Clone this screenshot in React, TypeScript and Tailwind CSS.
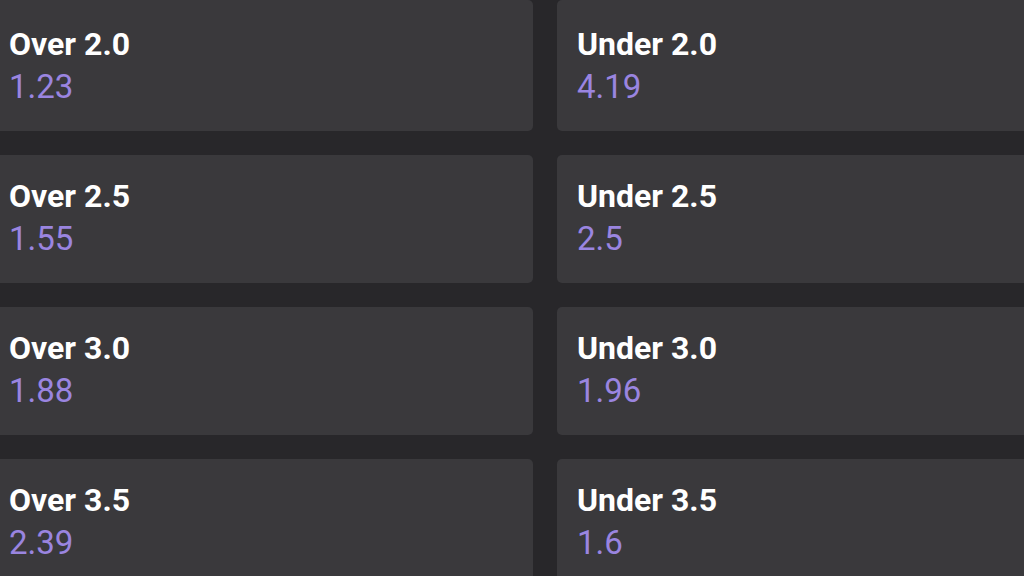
const rows: [string, string, string, string][] = [
    ['Over 2.0', '1.23', 'Under 2.0', '4.19'],
    ['Over 2.5', '1.55', 'Under 2.5', '2.5'],
    ['Over 3.0', '1.88', 'Under 3.0', '1.96'],
    ['Over 3.5', '2.39', 'Under 3.5', '1.6'],
];

function OddCard({ label, odd, first }: { label: string; odd: string; first: boolean }) {
    return (
        <div
            className={`rounded-[5px] bg-[#3a393c] px-[20px] ${first ? 'h-[131px] pt-[23px]' : 'h-[128px] pt-[20px]'}`}
        >
            <div className="text-[32px] leading-[42px] font-bold text-white">{label}</div>
            <div className="text-[33px] leading-[44px] text-[#9a85e0]">{odd}</div>
        </div>
    );
}

export default function App() {
    return (
        <div
            className="w-[1024px] h-[576px] overflow-hidden bg-[#28272a]"
            style={{ fontFamily: 'Roboto, "Liberation Sans", sans-serif' }}
        >
            <div className="-ml-[11px] w-[1112px] grid grid-cols-2 gap-x-[24px] gap-y-[24px]">
                {rows.map((r, i) => (
                    <>
                        <OddCard key={`o${i}`} label={r[0]} odd={r[1]} first={i === 0} />
                        <OddCard key={`u${i}`} label={r[2]} odd={r[3]} first={i === 0} />
                    </>
                ))}
            </div>
        </div>
    );
}
